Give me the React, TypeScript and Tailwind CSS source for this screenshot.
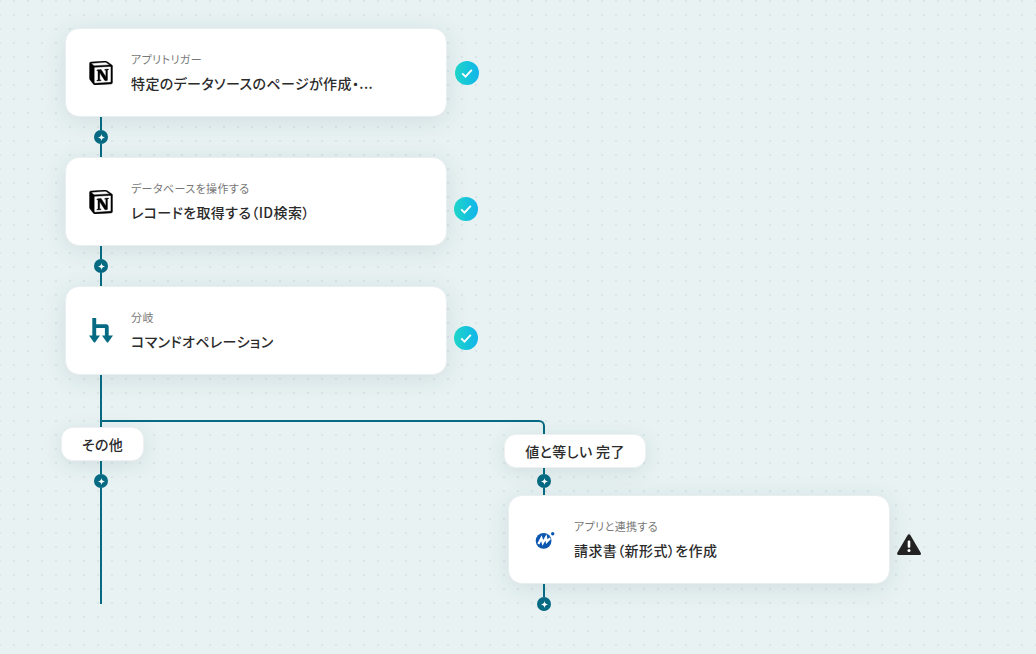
import React from 'react';
import { SiNotion } from 'react-icons/si';

const FlowNode: React.FC = () => (
  <div className="w-[14px] h-[14px] rounded-full bg-[#056a82] flex items-center justify-center shrink-0">
    <svg width="7" height="7" viewBox="0 0 8 8">
      <path d="M4 0C4.4 2.4 5.6 3.6 8 4C5.6 4.4 4.4 5.6 4 8C3.6 5.6 2.4 4.4 0 4C2.4 3.6 3.6 2.4 4 0Z" fill="#fff" />
    </svg>
  </div>
);

const VLine: React.FC<{ className: string }> = ({ className }) => (
  <div className={`w-[2px] bg-[#056a82] shrink-0 ${className}`} />
);

// 40px connector between two cards
const Connector: React.FC = () => (
  <div className="w-[72px] h-[40px] flex flex-col items-center">
    <VLine className="h-[13px]" />
    <FlowNode />
    <VLine className="h-[13px]" />
  </div>
);

const NotionIcon: React.FC = () => <SiNotion size={24} color="#000" stroke="#000" strokeWidth={0.35} />;

const BranchIcon: React.FC = () => (
  <svg width="24" height="25" viewBox="0 0 24 25" fill="#056a82">
    <path d="M3.3 0H7.2V6.3H17.2C18.6 6.3 19.7 7.4 19.7 8.8V18.5H15.9V10H7.2V18.5H3.3Z" />
    <path d="M0 17.6H11L6.2 24.2C5.8 24.7 5.2 24.7 4.8 24.2Z" />
    <path d="M13 17.6H24L19.2 24.2C18.8 24.7 18.2 24.7 17.8 24.2Z" />
  </svg>
);

const MoneyForwardIcon: React.FC = () => (
  <svg width="20" height="20" viewBox="0 0 20 20" className="ml-[1px]">
    <circle cx="8.6" cy="10.8" r="7.9" fill="#0b57b0" />
    <circle cx="17.7" cy="3.8" r="1.7" fill="#0b57b0" />
    <path d="M3.4 14L6.4 8.2L7.8 12.8L11 7.4L11.8 11.6L15.2 8.2" fill="none" stroke="#fff" strokeWidth="2.3" />
  </svg>
);

const CheckBadge: React.FC<{ className: string }> = ({ className }) => (
  <div className={`w-[24px] h-[24px] rounded-full bg-gradient-to-r from-[#20d5c8] to-[#14b4ea] flex items-center justify-center ${className}`}>
    <svg width="14" height="14" viewBox="0 0 14 14" fill="none">
      <path d="M2.2 7.4L5.5 10.6L11.8 3.8" stroke="#fff" strokeWidth="1.9" />
    </svg>
  </div>
);

const WarningBadge: React.FC = () => (
  <svg width="24" height="22" viewBox="0 0 24 22" className="ml-[7px] mt-[39px]">
    <path d="M12 1.8L22.4 19.6H1.6Z" fill="#222" stroke="#222" strokeWidth="3" strokeLinejoin="round" />
    <rect x="10.7" y="6.6" width="2.6" height="7.2" rx="1" fill="#fff" />
    <circle cx="12" cy="16.4" r="1.5" fill="#fff" />
  </svg>
);

const StepCard: React.FC<{ icon: React.ReactNode; label: string; title: string }> = ({ icon, label, title }) => (
  <div className="w-[382px] h-[89px] bg-white rounded-[14px] border border-[#e9eeef] shadow-[0_4px_24px_rgba(30,60,70,0.11)] flex items-center pl-[23px] shrink-0">
    <div className="w-[24px] flex justify-center shrink-0">{icon}</div>
    <div className="ml-[18px] -mt-[2px] flex flex-col w-[300px] [font-feature-settings:'palt']">
      <span className="text-[11px] leading-[16px] tracking-[0.4px] text-[#777]">{label}</span>
      <span className="mt-[6px] text-[14px] leading-[20px] font-medium tracking-[0.4px] text-[#2b2b2b]">{title}</span>
    </div>
  </div>
);

const Pill: React.FC<{ text: string; className: string }> = ({ text, className }) => (
  <div className={`h-[34px] -ml-[4px] bg-white rounded-[12px] border border-[#eef1f2] shadow-[0_4px_20px_rgba(30,60,70,0.11)] flex items-center justify-center text-[14px] font-medium tracking-[0.4px] text-[#2b2b2b] [font-feature-settings:'palt'] shrink-0 ${className}`}>
    {text}
  </div>
);

export default function App() {
  return (
    <div
      className="w-[1036px] h-[654px] overflow-hidden bg-[#e8f2f3] bg-[radial-gradient(circle,#d9e5e8_1px,transparent_1.2px)] bg-[size:14px_14px] bg-[position:7px_8px] pl-[65px] pt-[28px] flex flex-col font-['Noto_Sans_CJK_JP','Noto_Sans',sans-serif]"
    >
      <div className="flex items-start">
        <StepCard
          icon={<NotionIcon />}
          label="アプリトリガー"
          title="特定のデータソースのページが作成・..."
        />
        <CheckBadge className="ml-[8px] mt-[33px]" />
      </div>
      <Connector />
      <div className="flex items-start">
        <StepCard
          icon={<NotionIcon />}
          label="データベースを操作する"
          title="レコードを取得する（ID検索）"
        />
        <CheckBadge className="ml-[7px] mt-[40px]" />
      </div>
      <Connector />
      <div className="flex items-start">
        <StepCard icon={<BranchIcon />} label="分岐" title="コマンドオペレーション" />
        <CheckBadge className="ml-[7px] mt-[40px]" />
      </div>

      <div className="flex items-start">
        {/* left branch */}
        <div className="w-[72px] flex flex-col">
          <div className="w-[72px] flex justify-center">
            <VLine className="h-[52px]" />
          </div>
          <Pill text="その他" className="w-[83px]" />
          <div className="w-[72px] flex flex-col items-center">
            <VLine className="h-[13px]" />
            <FlowNode />
            <VLine className="h-[116px]" />
          </div>
        </div>

        {/* right branch */}
        <div className="ml-[371px] flex flex-col">
          <div className="mt-[45px] -ml-[407px] w-[444px] h-[14px] border-t-2 border-r-2 border-[#056a82] rounded-tr-[6px]" />
          <Pill text="値と等しい 完了" className="w-[142px]" />
          <div className="w-[72px] h-[27px] flex flex-col items-center">
            <VLine className="h-[6px]" />
            <FlowNode />
            <VLine className="h-[7px]" />
          </div>
          <div className="flex items-start">
            <StepCard icon={<MoneyForwardIcon />} label="アプリと連携する" title="請求書（新形式）を作成" />
            <WarningBadge />
          </div>
          <div className="w-[72px] flex flex-col items-center">
            <VLine className="h-[13px]" />
            <FlowNode />
          </div>
        </div>
      </div>
    </div>
  );
}
